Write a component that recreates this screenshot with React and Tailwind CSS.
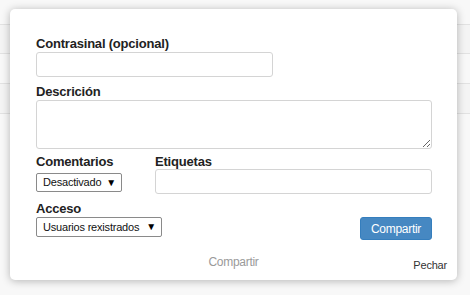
import React from "react";

const font = { fontFamily: '"Liberation Sans", Arial, sans-serif' };

function FakeSelect({ label, width }) {
  return (
    <div
      className={`flex items-center justify-between h-[19px] border border-[#8a8a8a] rounded-[2px] bg-white pl-[6px] pr-[5px] text-[11px] tracking-[-0.2px] text-[#111] ${width}`}
    >
      <span className="leading-[13px]">{label}</span>
      <span className="text-[10px] leading-[10px] text-black">▼</span>
    </div>
  );
}

export default function App() {
  return (
    <div className="relative w-[470px] h-[295px] overflow-hidden bg-[#f8f8f8]" style={font}>
      {/* background table rows */}
      <div className="flex flex-col">
        <div className="h-[25px] border-b border-[#e2e2e2]" />
        <div className="h-[29px] border-b border-[#e2e2e2] bg-[#f4f4f4]" />
        <div className="h-[30px] border-b border-[#e2e2e2]" />
        <div className="h-[30px] border-b border-[#e2e2e2] bg-[#f4f4f4]" />
      </div>

      {/* modal */}
      <div className="absolute left-[10px] top-[9px] w-[447px] h-[271px] bg-white rounded-[5px] shadow-[0_1px_8px_rgba(0,0,0,0.28)] flex flex-col">
        <div className="flex flex-col pl-[26px] pr-[25px] pt-[27px] text-[#222]">
          <div className="text-[13px] font-bold tracking-[-0.2px] leading-[15px]">Contrasinal (opcional)</div>
          <div className="mt-[1px] w-[237px] h-[25px] border border-[#d4d4d4] rounded-[3px]" />

          <div className="mt-[7px] text-[13px] font-bold tracking-[-0.2px] leading-[15px]">Descrición</div>
          <textarea className="block mt-[1px] w-[396px] h-[49px] border border-[#d4d4d4] rounded-[3px] resize-y outline-none" />

          <div className="mt-[5px] flex">
            <div className="w-[119px] flex flex-col">
              <div className="text-[13px] font-bold tracking-[-0.2px] leading-[15px]">Comentarios</div>
              <div className="mt-[4px]">
                <FakeSelect label="Desactivado" width="w-[86px]" />
              </div>
            </div>
            <div className="flex-1 flex flex-col">
              <div className="text-[13px] font-bold tracking-[-0.2px] leading-[15px]">Etiquetas</div>
              <div className="w-[277px] h-[25px] border border-[#d4d4d4] rounded-[3px]" />
            </div>
          </div>

          <div className="mt-[7px] flex items-start justify-between">
            <div className="flex flex-col">
              <div className="text-[13px] font-bold tracking-[-0.2px] leading-[15px]">Acceso</div>
              <div className="mt-[1px]">
                <FakeSelect label="Usuarios rexistrados" width="w-[126px] h-[20px]" />
              </div>
            </div>
            <div className="mt-[16px] w-[72px] h-[23px] flex items-center justify-center bg-[#4688c2] border border-[#357ebd] rounded-[3px] text-white text-[12px] tracking-[-0.3px]">
              Compartir
            </div>
          </div>
        </div>

        <div className="relative mt-[15px] h-[20px]">
          <div className="text-center text-[12px] tracking-[-0.3px] leading-[14px] text-[#9a9a9a]">Compartir</div>
          <div className="absolute right-[10px] top-[4px] text-[11px] tracking-[-0.2px] leading-[13px] text-[#333]">Pechar</div>
        </div>
      </div>
    </div>
  );
}
